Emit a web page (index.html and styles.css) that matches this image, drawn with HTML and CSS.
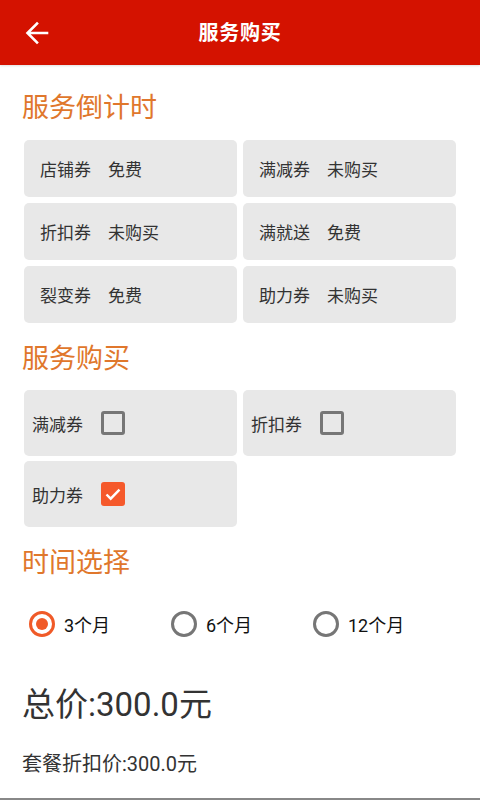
FILE: index.html
```html
<!DOCTYPE html>
<html lang="zh-CN">
<head>
<meta charset="utf-8">
<title>服务购买</title>
<link rel="stylesheet" href="styles.css">
</head>
<body>
<div class="page">
  <header class="topbar">
    <span class="back">
      <svg width="24" height="24" viewBox="0 0 24 24"><path d="M22 12H3.5M12 2.5L2.5 12 12 21.5" fill="none" stroke="#fff" stroke-width="2.6" stroke-linecap="square"/></svg>
    </span>
    <h1 class="title">服务购买</h1>
  </header>

  <h2 class="sec-title first">服务倒计时</h2>
  <div class="grid count">
    <div class="card"><span>店铺券</span><span class="val">免费</span></div>
    <div class="card"><span>满减券</span><span class="val">未购买</span></div>
    <div class="card"><span>折扣券</span><span class="val">未购买</span></div>
    <div class="card"><span>满就送</span><span class="val">免费</span></div>
    <div class="card"><span>裂变券</span><span class="val">免费</span></div>
    <div class="card"><span>助力券</span><span class="val">未购买</span></div>
  </div>

  <h2 class="sec-title">服务购买</h2>
  <div class="grid buy">
    <div class="card buy-card"><span>满减券</span><span class="cb"></span></div>
    <div class="card buy-card"><span>折扣券</span><span class="cb"></span></div>
    <div class="card buy-card"><span>助力券</span><span class="cb on"><svg width="24" height="24" viewBox="0 0 24 24"><path d="M5.5 12.5l4.2 4.2 8.8-9" fill="none" stroke="#fff" stroke-width="2.4"/></svg></span></div>
  </div>

  <h2 class="sec-title">时间选择</h2>
  <div class="radios">
    <div class="radio-opt"><span class="radio on"></span><span class="rlabel">3个月</span></div>
    <div class="radio-opt"><span class="radio"></span><span class="rlabel">6个月</span></div>
    <div class="radio-opt"><span class="radio"></span><span class="rlabel">12个月</span></div>
  </div>

  <div class="total">总价:300.0元</div>
  <div class="sub">套餐折扣价:300.0元</div>

  <div class="bottom-line"></div>
</div>
</body>
</html>
```

FILE: styles.css
```css
* { box-sizing: border-box; }
html, body { margin: 0; padding: 0; background: #fff; }
body {
  font-family: Roboto, "Noto Sans CJK SC", sans-serif;
  color: #333;
}
.page {
  width: 480px;
  height: 800px;
  display: flex;
  flex-direction: column;
  overflow: hidden;
}
.topbar {
  height: 65px;
  flex: none;
  background: #d41200;
  display: flex;
  align-items: center;
  justify-content: center;
  position: relative;
  box-shadow: 0 1px 2px rgba(0,0,0,0.12);
}
.back {
  position: absolute;
  left: 25px;
  top: 21px;
  width: 24px;
  height: 24px;
  display: block;
}
.back svg { display: block; }
.title {
  margin: 0;
  font-size: 20px;
  font-weight: bold;
  color: #fff;
  letter-spacing: 0.8px;
  line-height: 1;
}
.sec-title {
  margin: 18px 0 13px 22px;
  font-size: 27px;
  font-weight: normal;
  line-height: 36px;
  color: #e0772c;
}
.sec-title.first { margin-top: 25px; margin-bottom: 14px; }
.grid {
  display: grid;
  grid-template-columns: 213px 213px;
  column-gap: 6px;
  padding-left: 24px;
}
.count { grid-auto-rows: 57px; row-gap: 6px; }
.buy { grid-auto-rows: 66px; row-gap: 5px; }
.card {
  background: #e8e8e8;
  border-radius: 5px;
  display: flex;
  align-items: center;
  padding-left: 16px;
  font-size: 17px;
  color: #333;
}
.card .val { margin-left: 17px; }
.buy-card { padding-left: 8px; }
.cb {
  width: 24px;
  height: 24px;
  margin-left: 18px;
  border: 3px solid #767676;
  border-radius: 3px;
  display: block;
}
.cb.on {
  border: none;
  background: #f5592b;
}
.cb svg { display: block; }
.radios {
  display: flex;
  padding-left: 29px;
  margin-top: 17px;
  height: 26px;
  flex: none;
}
.radio-opt {
  width: 142px;
  display: flex;
  align-items: center;
}
.radio {
  width: 26px;
  height: 26px;
  border-radius: 50%;
  border: 3px solid #767676;
  display: flex;
  align-items: center;
  justify-content: center;
}
.radio.on { border-color: #f05a28; }
.radio.on::after {
  content: "";
  width: 12px;
  height: 12px;
  border-radius: 50%;
  background: #f05a28;
}
.rlabel {
  margin-left: 9px;
  font-size: 18px;
  color: #111;
}
.total {
  margin: 48px 0 0 22px;
  font-size: 33px;
  line-height: 40px;
  color: #333;
}
.sub {
  margin: 25px 0 0 22px;
  font-size: 20px;
  line-height: 28px;
  color: #333;
}
.bottom-line {
  margin-top: auto;
  height: 2px;
  background: #888;
  flex: none;
}
```
